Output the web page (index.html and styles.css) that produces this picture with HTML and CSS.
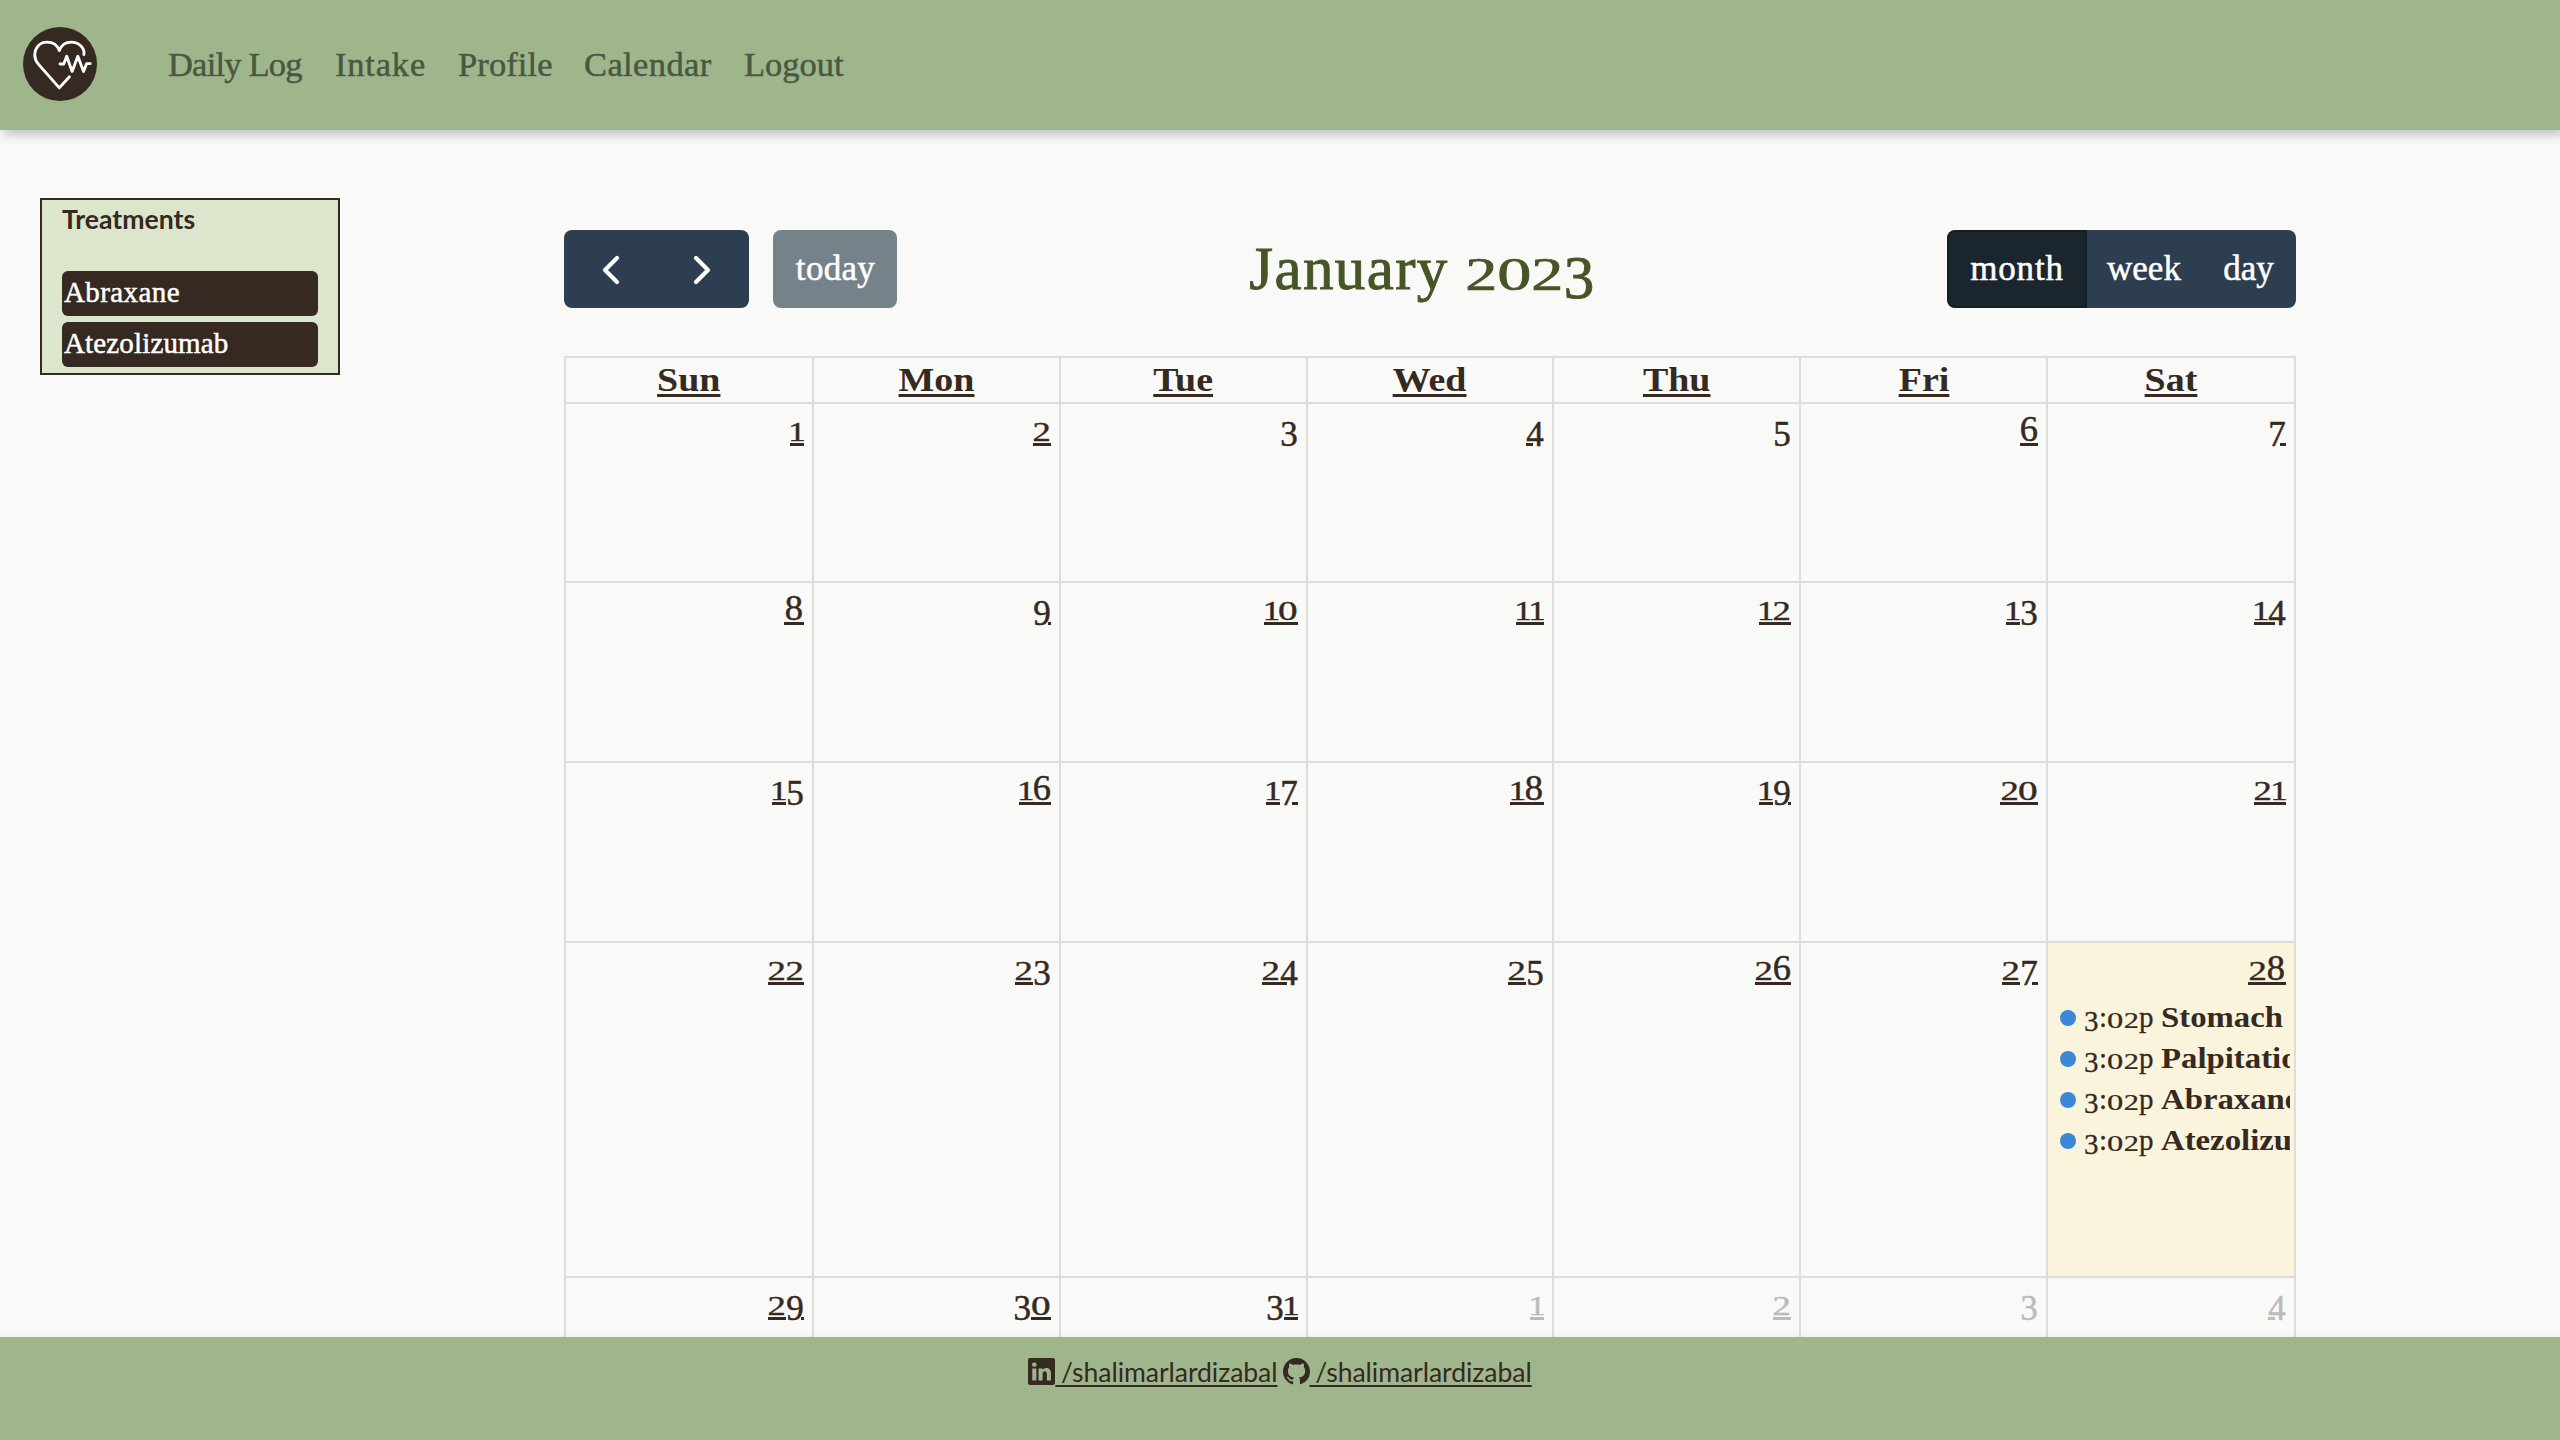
FILE: index.html
```html
<!DOCTYPE html>
<html lang="en">
<head>
<meta charset="utf-8">
<title>Calendar</title>
<link rel="stylesheet" href="styles.css">
</head>
<body>
<header class="navbar">
  <svg class="logo" viewBox="0 0 220 220" fill="none">
    <circle cx="110" cy="110" r="110" fill="#352921"/>
    <g stroke="#fff" stroke-width="8.5" stroke-linecap="round" stroke-linejoin="round">
      <path d="M181 82C185 61 164 45 144 45C128 45 114 54 108 70C102 54 88 45 72 45C49 45 35 62 35 84C35 95 40 104 47 112L108 181L138 148"/>
      <path d="M110 110H121L130 87L146 132L163 87L180 132L189 109H200"/>
    </g>
  </svg>
  <nav class="links">
    <a class="daily">Daily Log</a><a class="intake">Intake</a><a class="profile">Profile</a><a class="cal">Calendar</a><a class="logout">Logout</a>
  </nav>
</header>
<main class="page">
  <aside class="treatments">
    <strong class="panel-title">Treatments</strong>
    <div class="pill wide">Abraxane</div>
    <div class="pill">Atezolizumab</div>
  </aside>
  <section class="calendar">
    <div class="toolbar">
      <div class="left">
        <div class="group arrows">
          <svg viewBox="0 0 185 78" fill="none" stroke="#fff" stroke-width="4.2" stroke-linecap="round" stroke-linejoin="round"><path d="M53 28L41 40L53 52M132 28L144 40L132 52"/></svg>
        </div>
        <div class="group today">today</div>
      </div>
      <h2 class="title">January <span class="num">2023</span></h2>
      <div class="group views"><span class="month">month</span><span class="week">week</span><span class="day-view">day</span></div>
    </div>
    <div class="grid" id="grid"></div>
  </section>
</main>
<footer class="footer">
  <a class="social"><svg viewBox="0 0 16 16"><path d="M0 1.146C0 .513.526 0 1.175 0h13.65C15.474 0 16 .513 16 1.146v13.708c0 .633-.526 1.146-1.175 1.146H1.175C.526 16 0 15.487 0 14.854V1.146zm4.943 12.248V6.169H2.542v7.225h2.401zm-1.2-8.212c.837 0 1.358-.554 1.358-1.248-.015-.709-.52-1.248-1.342-1.248-.822 0-1.359.54-1.359 1.248 0 .694.521 1.248 1.327 1.248h.016zm4.908 8.212V9.359c0-.216.016-.432.08-.586.173-.431.568-.878 1.232-.878.869 0 1.216.662 1.216 1.634v3.865h2.401V9.25c0-2.22-1.184-3.252-2.764-3.252-1.274 0-1.845.7-2.165 1.193v.025h-.016a5.54 5.54 0 0 1 .016-.025V6.169h-2.4c.03.678 0 7.225 0 7.225h2.4z"/></svg><span>&nbsp;/shalimarlardizabal</span></a>
  <a class="social"><svg viewBox="0 0 16 16"><path d="M8 0C3.58 0 0 3.58 0 8c0 3.54 2.29 6.53 5.47 7.59.4.07.55-.17.55-.38 0-.19-.01-.82-.01-1.49-2.01.37-2.53-.49-2.69-.94-.09-.23-.48-.94-.82-1.13-.28-.15-.68-.52-.01-.53.63-.01 1.08.58 1.23.82.72 1.21 1.87.87 2.33.66.07-.52.28-.87.51-1.07-1.78-.2-3.64-.89-3.64-3.95 0-.87.31-1.59.82-2.15-.08-.2-.36-1.02.08-2.12 0 0 .67-.21 2.2.82.64-.18 1.32-.27 2-.27.68 0 1.36.09 2 .27 1.53-1.04 2.2-.82 2.2-.82.44 1.1.16 1.92.08 2.12.51.56.82 1.27.82 2.15 0 3.07-1.87 3.75-3.65 3.95.29.25.54.73.54 1.48 0 1.07-.01 1.93-.01 2.2 0 .21.15.46.55.38A8.012 8.012 0 0 0 16 8c0-4.42-3.58-8-8-8z"/></svg><span>&nbsp;/shalimarlardizabal</span></a>
</footer>
<script src="calendar.js"></script>
</body>
</html>
```
FILE: calendar.js
```js
// Numerals are set in old style: 0-2 at x-height, 3/4/5/7/9 below the baseline.
function oldStyle(text) {
  return String(text).split('').map(function (c) {
    return /\d/.test(c) ? '<span class="d d' + c + '"><span>' + c + '</span></span>' : c;
  }).join('');
}

var grid = document.getElementById('grid');
var html = ['Sun', 'Mon', 'Tue', 'Wed', 'Thu', 'Fri', 'Sat'].map(function (name) {
  return '<div class="cell head"><a>' + name + '</a></div>';
}).join('');

var events = ['Stomach', 'Palpitations', 'Abraxane', 'Atezolizumab'];

for (var i = 1; i <= 35; i++) {
  var other = i > 31;
  var day = other ? i - 31 : i;
  var isToday = i === 28;
  html += '<div class="cell' + (other ? ' other' : '') + (isToday ? ' current' : '') + '">' +
    '<a class="date">' + oldStyle(day) + '</a>';
  if (isToday) {
    html += events.map(function (name) {
      return '<div class="event"><i class="dot"></i><span class="time">' + oldStyle('3:02p') +
        '</span><b>' + name + '</b></div>';
    }).join('');
  }
  html += '</div>';
}
grid.innerHTML = html;

document.querySelectorAll('.num').forEach(function (el) {
  el.innerHTML = oldStyle(el.textContent);
});
```
FILE: styles.css
```css
* { box-sizing: border-box; }

body {
  margin: 0;
  height: 1440px;
  overflow: hidden;
  display: flex;
  flex-direction: column;
  background: #f9faf8;
  color: #352921;
  font-family: "Liberation Serif", serif;
}

.navbar {
  position: relative;
  z-index: 1;
  flex: none;
  height: 130px;
  display: flex;
  align-items: center;
  padding: 0 0 2px 23px;
  background: #9fb68d;
  box-shadow: 4px 4px 11px rgba(0, 0, 0, .25);
}
.logo { width: 74px; height: 74px; }
.links {
  display: flex;
  margin-left: 71px;
  font-size: 34.5px;
  line-height: 40px;
  color: #4a5841;
  -webkit-text-stroke: .5px;
  white-space: nowrap;
}
.links a { flex: none; }
.daily { width: 167px; letter-spacing: -.8px; }
.intake { width: 123px; letter-spacing: .8px; }
.profile { width: 126px; letter-spacing: .1px; }
.cal { width: 160px; letter-spacing: .4px; }

.page { flex: 1; min-height: 0; display: flex; align-items: flex-start; }

.treatments {
  flex: none;
  width: 300px;
  height: 177px;
  margin: 68px 224px 0 40px;
  padding: 0 20px;
  border: 2px solid #352921;
  background: #dce6cc;
}
.panel-title {
  display: block;
  height: 71px;
  font: bold 26.6px/38px Lato, sans-serif;
}
.pill {
  height: 45px;
  margin-bottom: 6px;
  padding-left: 2px;
  border-radius: 6px;
  background: #352921;
  color: #fff;
  font-size: 29px;
  line-height: 43px;
  letter-spacing: .15px;
  -webkit-text-stroke: .5px;
}
.pill.wide { letter-spacing: .4px; }

.calendar { flex: none; width: 1732px; margin-top: 100px; }
.toolbar {
  display: flex;
  align-items: center;
  justify-content: space-between;
  height: 78px;
  margin-bottom: 48px;
}
.left { display: flex; gap: 24px; }
.group {
  height: 78px;
  overflow: hidden;
  border-radius: 8px;
  background: #2d3e50;
  color: #fff;
  font-size: 35px;
  line-height: 78px;
  text-align: center;
  -webkit-text-stroke: .5px;
}
.arrows { width: 185px; }
.arrows svg { display: block; width: 185px; height: 78px; }
.today { width: 124px; padding-left: 1px; background: #76828a; letter-spacing: .3px; }
.views { display: flex; width: 349px; }
.month { width: 140px; background: #1b252e; border: 2px solid #151e27; border-radius: 8px 0 0 8px; line-height: 74px; letter-spacing: .8px; }
.week { width: 114px; }
.day-view { width: 95px; }
.title {
  margin: 0;
  color: #455526;
  font-size: 61px;
  font-weight: normal;
  line-height: 78px;
  letter-spacing: 1.4px;
  white-space: nowrap;
  -webkit-text-stroke: .9px;
}
.num { letter-spacing: 0; }

.grid {
  display: grid;
  grid-template-columns: 248px 247px 247px 246px 247px 247px 246px;
  grid-template-rows: 46px 179px 180px 180px 335px 180px;
  border: 2px solid #dcdddc;
}
.cell {
  min-width: 0;
  border: solid #dcdddc;
  border-width: 0 2px 2px 0;
  overflow: hidden;
}
.cell:nth-child(7n) { border-right: 0; }
.head { text-align: center; font-weight: bold; font-size: 34.5px; line-height: 43px; }
.head a {
  display: inline-block;
  transform: scaleX(1.1);
  text-decoration: underline 3px;
  text-underline-offset: 3px;
  text-decoration-skip-ink: none;
}

.date {
  display: flex;
  justify-content: flex-end;
  height: 54px;
  padding: 6px 8px 0 0;
  font-size: 35px;
  line-height: 40px;
  -webkit-text-stroke: .5px;
}
.other .date { color: #bcbbb8; }
.current { background: #fbf4dd; }

/* numerals */
.d { display: inline-block; width: .52em; text-align: center; }
.d > span { display: inline-block; transform-origin: 50% 79%; }
.d0, .d8 { width: .56em; }
.d1 { width: .4em; }
.d0 > span { transform: scale(1.12, .76); }
.d1 > span { margin: 0 -.05em; transform: scale(1, .76); }
.d2 > span { transform: scale(1.05, .76); }
.d3 > span, .d4 > span, .d5 > span, .d7 > span, .d9 > span { transform: translateY(.14em); }
.d6 > span, .d8 > span { transform: scaleX(1.04); }

/* underline segments leave room for descending strokes */
.date .d {
  height: 36px;
  background: linear-gradient(currentColor, currentColor) 0 100% / 100% 3px no-repeat;
}
.date .d3, .date .d5 { background: none; }
.date .d4 { background-size: 7px 3px; }
.date .d7 { background-position: 100% 100%; background-size: 6px 3px; }
.date .d9 { background-position: 100% 100%; background-size: 3px 3px; }

.event {
  display: flex;
  align-items: center;
  height: 41px;
  margin-right: 4px;
  padding-left: 12px;
  overflow: hidden;
  white-space: nowrap;
  font-size: 29px;
  line-height: 41px;
}
.dot { flex: none; width: 16px; height: 16px; margin: 0 8px 0 0; border-radius: 50%; background: #3b88d8; }
.time { flex: none; width: 77px; letter-spacing: .5px; -webkit-text-stroke: .3px; }
.event b { flex: none; transform: scaleX(1.13); transform-origin: 0 50%; }

.footer {
  position: relative;
  z-index: 1;
  flex: none;
  height: 103px;
  display: flex;
  justify-content: center;
  align-items: flex-start;
  gap: 5px;
  padding-top: 16px;
  background: #9fb68d;
  box-shadow: 0 -1px 8px rgba(0, 0, 0, .06);
  font: 26.6px/38px Lato, sans-serif;
}
.social { display: flex; align-items: center; }
.social svg { width: 27px; height: 27px; margin-bottom: 1px; fill: #352921; }
.social span { letter-spacing: -.06px; word-spacing: -1px; text-decoration: underline 2px; text-underline-offset: 3px; text-decoration-skip-ink: none; }
```
